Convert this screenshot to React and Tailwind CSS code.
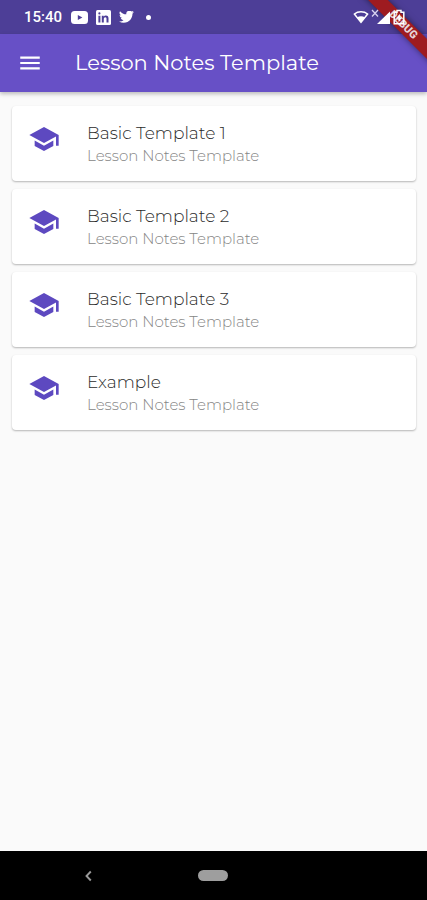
import React from 'react';
import { MdMenu, MdSchool } from 'react-icons/md';

const templates = [
  { id: 1, title: 'Basic Template 1', subtitle: 'Lesson Notes Template' },
  { id: 2, title: 'Basic Template 2', subtitle: 'Lesson Notes Template' },
  { id: 3, title: 'Basic Template 3', subtitle: 'Lesson Notes Template' },
  { id: 4, title: 'Example', subtitle: 'Lesson Notes Template' }
];

const YoutubeIcon = () => (
  <svg viewBox="0 0 17 13" className="w-[17px] h-[13px]" aria-hidden="true">
    <rect width="17" height="13" rx="3.5" fill="#fff" />
    <path d="M6.8 3.9v5.2L11.4 6.5z" fill="#4d3e97" />
  </svg>
);

const LinkedinIcon = () => (
  <svg viewBox="0 0 15 15" className="w-[15px] h-[15px]" aria-hidden="true">
    <rect width="15" height="15" rx="1.5" fill="#fff" />
    <path
      d="M2.4 5.8h2v6.6h-2zM2.3 3.4a1.1 1.1 0 1 0 2.2 0 1.1 1.1 0 1 0-2.2 0zM5.8 5.8h1.9v.9c.4-.7 1.1-1.1 2.1-1.1 2 0 2.7 1.2 2.7 3v3.8h-2V9c0-.9-.2-1.7-1.2-1.7S7.8 8 7.8 9v3.4h-2z"
      fill="#4d3e97"
    />
  </svg>
);

const TwitterIcon = () => (
  <svg viewBox="0 3 24 19" className="w-[15px] h-3" fill="#fff" aria-hidden="true">
    <path d="M23.95 4.57a10 10 0 0 1-2.82.77 4.96 4.96 0 0 0 2.16-2.72c-.95.55-2 .95-3.13 1.18a4.92 4.92 0 0 0-8.38 4.48C7.69 8.1 4.07 6.13 1.64 3.16a4.93 4.93 0 0 0 1.52 6.57 4.9 4.9 0 0 1-2.23-.61v.06a4.92 4.92 0 0 0 3.95 4.83 5 5 0 0 1-2.21.08 4.94 4.94 0 0 0 4.6 3.42A9.87 9.87 0 0 1 0 19.54a14 14 0 0 0 7.55 2.21c9.05 0 14-7.5 14-13.98 0-.21 0-.42-.02-.63a9.9 9.9 0 0 0 2.42-2.57z" />
  </svg>
);

const WifiIcon = () => (
  <svg viewBox="0 0 16 14" className="w-4 h-3.5" aria-hidden="true">
    <path d="M1.4 4C5 1 11 1 14.6 4L8 12.4z" fill="none" stroke="#fff" strokeWidth="1.5" />
    <path d="M4 7.4c2.4-1.6 5.6-1.6 8 0L8 12.6z" fill="#fff" />
  </svg>
);

const SignalIcon = () => (
  <svg viewBox="0 0 20 16" className="w-5 h-4" aria-hidden="true">
    <path d="M1 1l6 6.5M7 1L1 7.5" stroke="#d9d3f0" strokeWidth="1.3" fill="none" />
    <path d="M19 2.5V15H6z" fill="#fff" />
  </svg>
);

const BatteryIcon = () => (
  <svg viewBox="0 0 12 16" className="w-3 h-4" aria-hidden="true">
    <path d="M4 1.5h4v1.7h2.8v11.6H1.2V3.2H4z" fill="none" stroke="#fff" strokeWidth="1.5" />
    <path d="M6.8 4.8L3.6 9.6h2v3.8l3.2-4.9h-2z" fill="#fff" />
  </svg>
);

const StatusBar = () => (
  <div className="flex items-center h-[34px] pl-6 pr-[22px] bg-[#4d3e97] text-white">
    <span className="font-['Roboto',sans-serif] font-medium text-[15px] leading-5">15:40</span>
    <div className="flex items-center gap-2 ml-[9px]">
      <YoutubeIcon />
      <LinkedinIcon />
      <TwitterIcon />
      <span className="w-[5px] h-[5px] ml-1 rounded-full bg-white" />
    </div>
    <div className="relative z-30 flex items-center ml-auto gap-[2px]">
      <WifiIcon />
      <SignalIcon />
      <BatteryIcon />
    </div>
  </div>
);

const DebugBanner = () => (
  <div className="absolute top-0 right-0 z-20 w-20 h-20 overflow-hidden pointer-events-none">
    <div className="absolute top-[18px] -right-9 w-[120px] h-3.5 rotate-45 bg-[#9e1b20] shadow-[0_0_6px_rgba(0,0,0,0.5)] text-center font-['Roboto',sans-serif] font-black text-[11px] leading-[14px] text-[#e6d5d8]">
      DEBUG
    </div>
  </div>
);

const TemplateCard = ({ title, subtitle }) => (
  <li>
    <button
      type="button"
      className="flex items-start w-full h-[75px] pl-4 pt-4 rounded-[4px] bg-white text-left shadow-[0_1px_2px_rgba(0,0,0,0.28)]"
    >
      <MdSchool className="w-8 h-8 mt-px shrink-0 text-[#5d49c0]" />
      <span className="flex flex-col ml-[27px]">
        <span className="text-[17px] leading-[22px] font-light text-[#2b2b2b]">{title}</span>
        <span className="text-[15px] leading-6 font-light text-[#858585]">{subtitle}</span>
      </span>
    </button>
  </li>
);

const App = () => {
  return (
    <div className="relative flex flex-col min-h-screen bg-[#fafafa] font-['Montserrat',sans-serif]">
      <StatusBar />
      <DebugBanner />

      <header className="relative z-10 flex items-center h-[58px] pl-[17px] bg-[#6750c6] text-white shadow-[0_2px_4px_rgba(0,0,0,0.25)]">
        <button type="button" aria-label="Open menu">
          <MdMenu className="w-[26px] h-[26px]" />
        </button>
        <h1 className="ml-8 text-[21px] leading-7 font-normal">Lesson Notes Template</h1>
      </header>

      <main className="flex-1 pt-3.5 pl-3 pr-[11px]">
        <ul className="flex flex-col gap-2">
          {templates.map((template) => (
            <TemplateCard key={template.id} title={template.title} subtitle={template.subtitle} />
          ))}
        </ul>
      </main>

      <nav className="grid grid-cols-5 items-center h-[49px] bg-black">
        <button type="button" aria-label="Back" className="col-start-2 justify-self-start">
          <svg viewBox="0 0 8 12" className="w-2 h-3" aria-hidden="true">
            <path d="M5.8 1.5L1.5 6l4.3 4.5" fill="none" stroke="#999" strokeWidth="1.9" />
          </svg>
        </button>
        <button
          type="button"
          aria-label="Home"
          className="justify-self-center w-[30px] h-[11px] rounded-full bg-[#9e9e9e]"
        />
      </nav>
    </div>
  );
};

export default App;
